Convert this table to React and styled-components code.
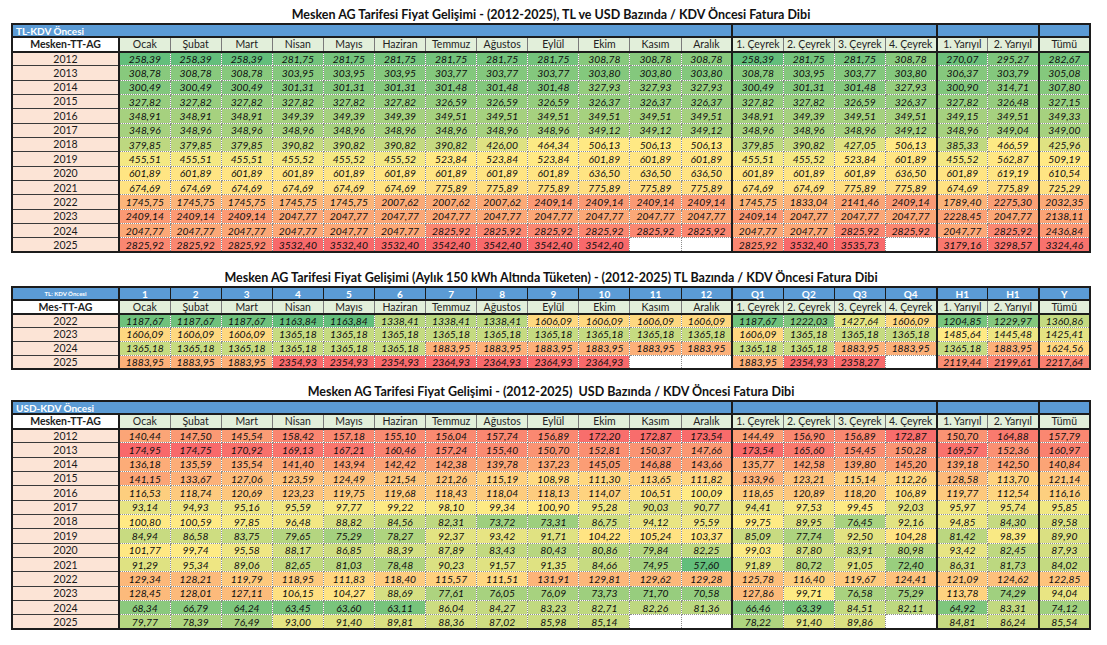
import React from "react";
import styled, { createGlobalStyle } from "styled-components";

const GlobalStyle = createGlobalStyle`
  html, body {
    margin: 0;
    padding: 0;
    background: #ffffff;
  }
  body {
    font-family: Lato, "Liberation Sans", sans-serif;
    color: #1e1e1e;
  }
`;

const MONTHS = ["Ocak", "Şubat", "Mart", "Nisan", "Mayıs", "Haziran", "Temmuz", "Ağustos", "Eylül", "Ekim", "Kasım", "Aralık"];
const PERIODS = ["1. Çeyrek", "2. Çeyrek", "3. Çeyrek", "4. Çeyrek", "1. Yarıyıl", "2. Yarıyıl", "Tümü"];
const HEADERS = [...MONTHS, ...PERIODS];
const BAND_CODES = ["1", "2", "3", "4", "5", "6", "7", "8", "9", "10", "11", "12", "Q1", "Q2", "Q3", "Q4", "H1", "H1", "Y"];
// value columns that close a block (Aralık, 4. Çeyrek, 2. Yarıyıl)
const EDGES = [11, 15, 17];

const TL_ROWS = [
  ["2012", "258,39 258,39 258,39 281,75 281,75 281,75 281,75 281,75 281,75 308,78 308,78 308,78 258,39 281,75 281,75 308,78 270,07 295,27 282,67"],
  ["2013", "308,78 308,78 308,78 303,95 303,95 303,95 303,77 303,77 303,77 303,80 303,80 303,80 308,78 303,95 303,77 303,80 306,37 303,79 305,08"],
  ["2014", "300,49 300,49 300,49 301,31 301,31 301,31 301,48 301,48 301,48 327,93 327,93 327,93 300,49 301,31 301,48 327,93 300,90 314,71 307,80"],
  ["2015", "327,82 327,82 327,82 327,82 327,82 327,82 326,59 326,59 326,59 326,37 326,37 326,37 327,82 327,82 326,59 326,37 327,82 326,48 327,15"],
  ["2016", "348,91 348,91 348,91 349,39 349,39 349,39 349,51 349,51 349,51 349,51 349,51 349,51 348,91 349,39 349,51 349,51 349,15 349,51 349,33"],
  ["2017", "348,96 348,96 348,96 348,96 348,96 348,96 348,96 348,96 348,96 349,12 349,12 349,12 348,96 348,96 348,96 349,12 348,96 349,04 349,00"],
  ["2018", "379,85 379,85 379,85 390,82 390,82 390,82 390,82 426,00 464,34 506,13 506,13 506,13 379,85 390,82 427,05 506,13 385,33 466,59 425,96"],
  ["2019", "455,51 455,51 455,51 455,52 455,52 455,52 523,84 523,84 523,84 601,89 601,89 601,89 455,51 455,52 523,84 601,89 455,52 562,87 509,19"],
  ["2020", "601,89 601,89 601,89 601,89 601,89 601,89 601,89 601,89 601,89 636,50 636,50 636,50 601,89 601,89 601,89 636,50 601,89 619,19 610,54"],
  ["2021", "674,69 674,69 674,69 674,69 674,69 674,69 775,89 775,89 775,89 775,89 775,89 775,89 674,69 674,69 775,89 775,89 674,69 775,89 725,29"],
  ["2022", "1745,75 1745,75 1745,75 1745,75 1745,75 2007,62 2007,62 2007,62 2409,14 2409,14 2409,14 2409,14 1745,75 1833,04 2141,46 2409,14 1789,40 2275,30 2032,35"],
  ["2023", "2409,14 2409,14 2409,14 2047,77 2047,77 2047,77 2047,77 2047,77 2047,77 2047,77 2047,77 2047,77 2409,14 2047,77 2047,77 2047,77 2228,45 2047,77 2138,11"],
  ["2024", "2047,77 2047,77 2047,77 2047,77 2047,77 2047,77 2825,92 2825,92 2825,92 2825,92 2825,92 2825,92 2047,77 2047,77 2825,92 2825,92 2047,77 2825,92 2436,84"],
  ["2025", "2825,92 2825,92 2825,92 3532,40 3532,40 3532,40 3542,40 3542,40 3542,40 3542,40 - - 2825,92 3532,40 3535,73 - 3179,16 3298,57 3324,46"],
];

const LOW_ROWS = [
  ["2022", "1187,67 1187,67 1187,67 1163,84 1163,84 1338,41 1338,41 1338,41 1606,09 1606,09 1606,09 1606,09 1187,67 1222,03 1427,64 1606,09 1204,85 1229,97 1360,86"],
  ["2023", "1606,09 1606,09 1606,09 1365,18 1365,18 1365,18 1365,18 1365,18 1365,18 1365,18 1365,18 1365,18 1606,09 1365,18 1365,18 1365,18 1485,64 1445,48 1425,41"],
  ["2024", "1365,18 1365,18 1365,18 1365,18 1365,18 1365,18 1883,95 1883,95 1883,95 1883,95 1883,95 1883,95 1365,18 1365,18 1883,95 1883,95 1365,18 1883,95 1624,56"],
  ["2025", "1883,95 1883,95 1883,95 2354,93 2354,93 2354,93 2364,93 2364,93 2364,93 2364,93 - - 1883,95 2354,93 2358,27 - 2119,44 2199,61 2217,64"],
];

const USD_ROWS = [
  ["2012", "140,44 147,50 145,54 158,42 157,18 155,10 156,04 157,74 156,89 172,20 172,87 173,54 144,49 156,90 156,89 172,87 150,70 164,88 157,79"],
  ["2013", "174,95 174,75 170,92 169,13 167,21 160,46 157,24 155,40 150,70 152,81 150,37 147,66 173,54 165,60 154,45 150,28 169,57 152,36 160,97"],
  ["2014", "136,18 135,59 135,54 141,40 143,94 142,42 142,38 139,78 137,23 145,05 146,88 143,66 135,77 142,58 139,80 145,20 139,18 142,50 140,84"],
  ["2015", "141,15 133,67 127,06 123,59 124,49 121,54 121,26 115,19 108,98 111,30 113,65 111,82 133,96 123,21 115,14 112,26 128,58 113,70 121,14"],
  ["2016", "116,53 118,74 120,69 123,23 119,75 119,68 118,43 118,04 118,13 114,07 106,51 100,09 118,65 120,89 118,20 106,89 119,77 112,54 116,16"],
  ["2017", "93,14 94,93 95,16 95,59 97,77 99,22 98,10 99,34 100,90 95,28 90,03 90,77 94,41 97,53 99,45 92,03 95,97 95,74 95,85"],
  ["2018", "100,80 100,59 97,85 96,48 88,82 84,56 82,31 73,72 73,31 86,75 94,12 95,59 99,75 89,95 76,45 92,16 94,85 84,30 89,58"],
  ["2019", "84,94 86,58 83,75 79,65 75,29 78,27 92,37 93,42 91,71 104,22 105,24 103,37 85,09 77,74 92,50 104,28 81,42 98,39 89,90"],
  ["2020", "101,77 99,74 95,58 88,17 86,85 88,39 87,89 83,43 80,43 80,86 79,84 82,25 99,03 87,80 83,91 80,98 93,42 82,45 87,93"],
  ["2021", "91,29 95,34 89,06 82,65 81,03 78,48 90,23 91,57 91,35 84,66 74,95 57,60 91,89 80,72 91,05 72,40 86,31 81,73 84,02"],
  ["2022", "129,34 128,21 119,79 118,95 111,83 118,40 115,57 111,51 131,91 129,81 129,62 129,28 125,78 116,40 119,67 124,41 121,09 124,62 122,85"],
  ["2023", "128,45 128,01 127,11 106,15 104,27 88,69 77,61 76,05 76,09 73,73 71,70 70,58 127,86 99,71 76,58 75,29 113,78 74,29 94,04"],
  ["2024", "68,34 66,79 64,24 63,45 63,60 63,11 86,04 84,27 83,23 82,71 82,26 81,36 66,46 63,39 84,51 82,11 64,92 83,31 74,12"],
  ["2025", "79,77 78,39 76,49 93,00 91,40 89,81 88,36 87,02 85,98 85,14 - - 78,22 91,40 89,86 - 84,81 86,24 85,54"],
];

// Excel-style three colour scale: green -> yellow -> red
const GREEN = [99, 190, 123];
const YELLOW = [255, 235, 132];
const RED = [248, 105, 107];

const mix = (a, b, t) => {
  const k = Math.max(0, Math.min(1, t));
  return `rgb(${a.map((v, i) => Math.round(v + (b[i] - v) * k)).join(",")})`;
};

const scaleColor = (raw, { min, mid, max }) => {
  if (raw === "-") return "#ffffff";
  const v = parseFloat(raw.replace(",", "."));
  if (v <= mid) return mix(GREEN, YELLOW, (v - min) / (mid - min));
  return mix(YELLOW, RED, (v - mid) / (max - mid));
};

const Page = styled.div`
  display: flex;
  flex-direction: column;
  width: 1080px;
  padding: 6px 0 0 11px;
`;

const Section = styled.section`
  display: flex;
  flex-direction: column;
  margin-bottom: ${(p) => p.$gap || 0}px;
`;

const Title = styled.h2`
  margin: 0;
  height: 17px;
  line-height: 17px;
  text-align: center;
  font-size: 12.5px;
  font-weight: 700;
  color: #111111;
  white-space: pre;
`;

const Sheet = styled.table`
  width: 1080px;
  table-layout: fixed;
  border-collapse: collapse;
  border: 2px solid #1c1c1c;
  font-size: 10px;
`;

const LabelCol = styled.col`
  width: 107px;
`;

const Row = styled.tr`
  height: ${(p) => p.$h}px;
`;

const BandCell = styled.td`
  padding: 0 0 0 ${(p) => (p.$left ? 3 : 0)}px;
  background: #5b9bd5;
  color: #ffffff;
  font-weight: 700;
  font-size: ${(p) => (p.$tiny ? 6 : 10)}px;
  text-align: ${(p) => (p.$left ? "left" : "center")};
  line-height: 1;
  white-space: nowrap;
  border: 1px solid #1c1c1c;
  border-bottom: 2px solid #1c1c1c;
  border-right-width: ${(p) => (p.$edge ? 2 : 1)}px;
`;

const HeadCell = styled.td`
  padding: 0;
  background: ${(p) => (p.$label ? "#ffffff" : "#e2efda")};
  color: #222222;
  font-size: 10.5px;
  font-weight: ${(p) => (p.$label ? 700 : 400)};
  text-align: center;
  line-height: 1;
  white-space: nowrap;
  overflow: hidden;
  border: 1px solid #7a7a7a;
  border-bottom: 2px solid #1c1c1c;
  border-right: ${(p) => (p.$edge ? "2px solid #1c1c1c" : "1px solid #7a7a7a")};
`;

const YearCell = styled.td`
  padding: 0;
  background: #fce4d6;
  color: #1a1a1a;
  font-size: 10.5px;
  text-align: center;
  line-height: 1;
  border-bottom: 1px solid #3a3a3a;
  border-right: 2px solid #1c1c1c;
`;

const ValueCell = styled.td`
  padding: 0;
  color: #0d0d0d;
  font-style: italic;
  font-size: 10.3px;
  text-align: center;
  line-height: 1;
  white-space: nowrap;
  overflow: hidden;
  border: 1px dotted #8c8c8c;
  border-right: ${(p) => (p.$edge ? "2px solid #1c1c1c" : "1px dotted #8c8c8c")};
`;

const Cols = () => (
  <colgroup>
    <LabelCol />
    {HEADERS.map((h, i) => (
      <col key={i} />
    ))}
  </colgroup>
);

const HeaderRow = ({ label, h }) => (
  <Row $h={h}>
    <HeadCell $label $edge>{label}</HeadCell>
    {HEADERS.map((hd, i) => (
      <HeadCell key={hd + i} $edge={EDGES.includes(i)}>{hd}</HeadCell>
    ))}
  </Row>
);

const DataRows = ({ rows, scale, h }) =>
  rows.map(([year, line]) => (
    <Row key={year} $h={h}>
      <YearCell>{year}</YearCell>
      {line.split(" ").map((v, i) => (
        <ValueCell key={i} $edge={EDGES.includes(i)} style={{ background: scaleColor(v, scale) }}>
          {v === "-" ? "" : v}
        </ValueCell>
      ))}
    </Row>
  ));

const YearTable = ({ band, label, rows, scale }) => (
  <Sheet>
    <Cols />
    <tbody>
      <Row $h={13}>
        <BandCell colSpan={13} $left $edge>{band}</BandCell>
        <BandCell colSpan={4} $edge />
        <BandCell colSpan={2} $edge />
        <BandCell />
      </Row>
      <HeaderRow label={label} h={14.5} />
      <DataRows rows={rows} scale={scale} h={14.35} />
    </tbody>
  </Sheet>
);

const LowUsageTable = () => (
  <Sheet>
    <Cols />
    <tbody>
      <Row $h={13}>
        <BandCell $tiny $edge>TL: KDV Öncesi</BandCell>
        {BAND_CODES.map((c, i) => (
          <BandCell key={i} $edge={EDGES.includes(i)}>{c}</BandCell>
        ))}
      </Row>
      <HeaderRow label="Mes-TT-AG" h={13.5} />
      <DataRows rows={LOW_ROWS} scale={{ min: 1163.84, mid: 1480, max: 2364.93 }} h={13.8} />
    </tbody>
  </Sheet>
);

export default function App() {
  return (
    <>
      <GlobalStyle />
      <Page>
        <Section $gap={16}>
          <Title>Mesken AG Tarifesi Fiyat Gelişimi - (2012-2025), TL ve USD Bazında / KDV Öncesi Fatura Dibi</Title>
          <YearTable
            band="TL-KDV Öncesi"
            label="Mesken-TT-AG"
            rows={TL_ROWS}
            scale={{ min: 258.39, mid: 470, max: 3542.4 }}
          />
        </Section>
        <Section $gap={13}>
          <Title>Mesken AG Tarifesi Fiyat Gelişimi (Aylık 150 kWh Altında Tüketen) - (2012-2025) TL Bazında / KDV Öncesi Fatura Dibi</Title>
          <LowUsageTable />
        </Section>
        <Section>
          <Title>Mesken AG Tarifesi Fiyat Gelişimi - (2012-2025)  USD Bazında / KDV Öncesi Fatura Dibi</Title>
          <YearTable
            band="USD-KDV Öncesi"
            label="Mesken-TT-AG"
            rows={USD_ROWS}
            scale={{ min: 57.6, mid: 100, max: 174.95 }}
          />
        </Section>
      </Page>
    </>
  );
}
